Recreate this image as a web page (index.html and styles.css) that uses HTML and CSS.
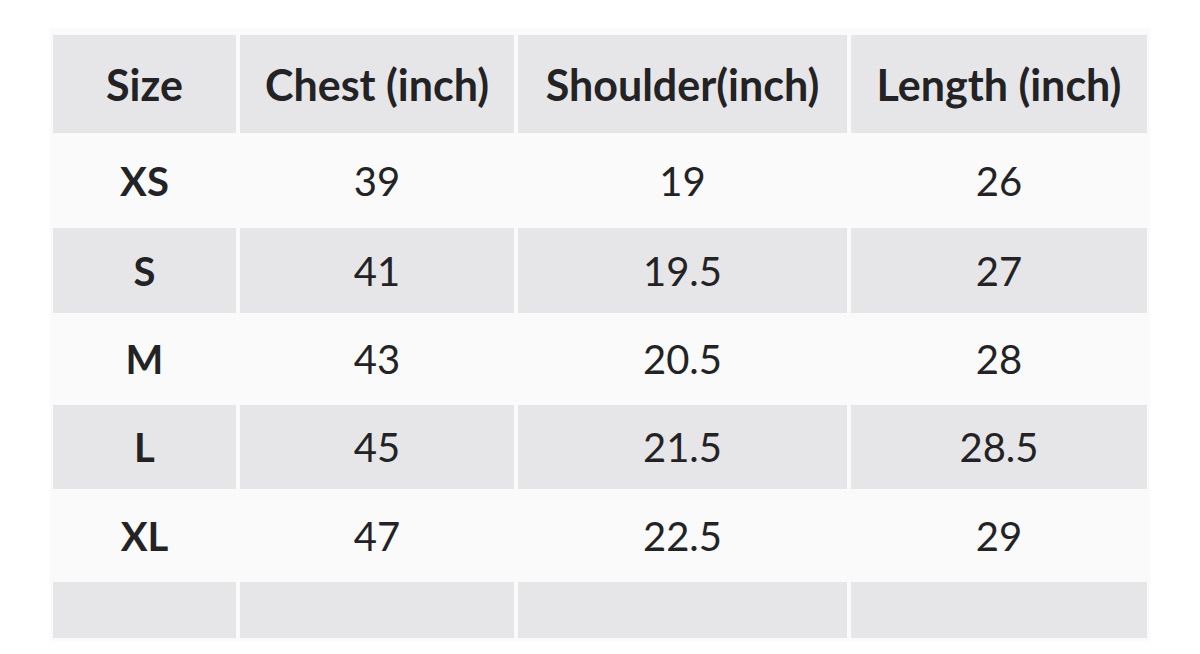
FILE: index.html
```html
<!DOCTYPE html>
<html lang="en">
<head>
<meta charset="utf-8">
<title>Size chart</title>
<link rel="stylesheet" href="styles.css">
</head>
<body>
<div class="frame">
  <div class="chart">
    <div class="row row-head shade">
      <div class="cell">Size</div>
      <div class="cell">Chest (inch)</div>
      <div class="cell">Shoulder(inch)</div>
      <div class="cell">Length (inch)</div>
    </div>
    <div class="row row-xs">
      <div class="cell size">XS</div>
      <div class="cell">39</div>
      <div class="cell">19</div>
      <div class="cell">26</div>
    </div>
    <div class="row row-s shade">
      <div class="cell size">S</div>
      <div class="cell">41</div>
      <div class="cell">19.5</div>
      <div class="cell">27</div>
    </div>
    <div class="row row-m">
      <div class="cell size">M</div>
      <div class="cell">43</div>
      <div class="cell">20.5</div>
      <div class="cell">28</div>
    </div>
    <div class="row row-l shade">
      <div class="cell size">L</div>
      <div class="cell">45</div>
      <div class="cell">21.5</div>
      <div class="cell">28.5</div>
    </div>
    <div class="row row-xl">
      <div class="cell size">XL</div>
      <div class="cell">47</div>
      <div class="cell">22.5</div>
      <div class="cell">29</div>
    </div>
    <div class="row row-end shade">
      <div class="cell"></div>
      <div class="cell"></div>
      <div class="cell"></div>
      <div class="cell"></div>
    </div>
  </div>
</div>
</body>
</html>
```
FILE: styles.css
```css
html, body {
  margin: 0;
  padding: 0;
  background: #ffffff;
}

body {
  padding: 28px 0 0 50px;
  font-family: Lato, "Open Sans", sans-serif;
  color: #232325;
}

.frame {
  width: 1100px;
  background: #fafafa;
  padding: 7px 0 3px 3px;
  box-sizing: border-box;
}

.chart {
  display: flex;
  flex-direction: column;
}

.row {
  display: grid;
  grid-template-columns: 183px 274px 329px 296px;
  column-gap: 4px;
}

.cell {
  display: flex;
  align-items: center;
  justify-content: center;
  font-size: 40px;
  font-weight: 400;
  white-space: nowrap;
}

.shade .cell {
  background: #e6e6e8;
}

.row-head .cell {
  font-size: 43px;
  font-weight: 700;
}

.cell.size {
  font-weight: 700;
}

.row-head { height: 98px; }
.row-xs { height: 95px; }
.row-s { height: 85px; }
.row-m { height: 92px; }
.row-l { height: 84px; }
.row-xl { height: 93px; }
.row-end { height: 56px; }
```
